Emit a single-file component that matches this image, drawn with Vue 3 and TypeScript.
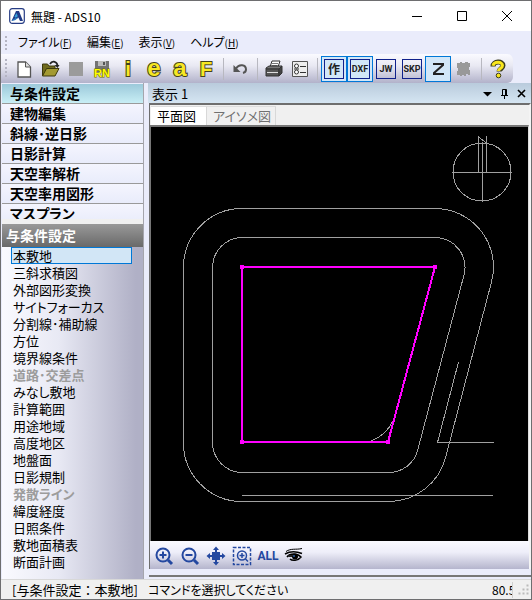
<script setup lang="ts">
import { ref } from 'vue'

interface Menu { label: string; key: string }
interface Item { label: string; disabled?: boolean }

const menus: Menu[] = [
  { label: 'ファイル', key: 'F' },
  { label: '編集', key: 'E' },
  { label: '表示', key: 'V' },
  { label: 'ヘルプ', key: 'H' },
]
const categories: string[] = ['与条件設定', '建物編集', '斜線･逆日影', '日影計算', '天空率解析', '天空率用図形', 'マスプラン']
const items: Item[] = [
  { label: '本敷地' }, { label: '三斜求積図' }, { label: '外部図形変換' }, { label: 'サイトフォーカス' },
  { label: '分割線･補助線' }, { label: '方位' }, { label: '境界線条件' }, { label: '道路･交差点', disabled: true },
  { label: 'みなし敷地' }, { label: '計算範囲' }, { label: '用途地域' }, { label: '高度地区' },
  { label: '地盤面' }, { label: '日影規制' }, { label: '発散ライン', disabled: true }, { label: '緯度経度' },
  { label: '日照条件' }, { label: '敷地面積表' }, { label: '断面計画' },
]
const tabs: string[] = ['平面図', 'アイソメ図']
const letters: string[] = ['i', 'e', 'a', 'F']
const category = ref('与条件設定')
const item = ref('本敷地')
const tab = ref('平面図')
const toggles = ref([
  { label: '作', on: true }, { label: 'DXF', on: true }, { label: 'JW', on: false }, { label: 'SKP', on: false },
])
const corners: [number, number][] = [[242, 267], [435, 267], [388, 442], [242, 442]]
</script>

<template>
  <div class="window">
    <header class="titlebar">
      <svg class="logo" width="16" height="16" viewBox="0 0 16 16" aria-hidden="true">
        <rect x=".7" y=".7" width="14.6" height="14.6" rx="2.5" fill="#fff" stroke="#263c84" stroke-width="1.2" />
        <path d="M2.5 13 7 3h3l4 10h-3L9.3 9.5 6 11.5z" fill="#203a86" />
        <path d="M5.500 8.500 7.500 5l1.300 3.200-2.200 1.500z" fill="#37a2dc" />
        <path d="M2.500 13c2-2.500 4-3.500 7-3.200L6 12.300z" fill="#2b78bd" />
      </svg>
      <h1 class="title">無題 - ADS10</h1>
      <div class="captions">
        <button class="caption" aria-label="最小化"><svg width="12" height="12"><path d="M1 6.500h10" stroke="#000" /></svg></button>
        <button class="caption" aria-label="最大化"><svg width="12" height="12"><path d="M1.500 1.500h9v9h-9z" fill="none" stroke="#000" /></svg></button>
        <button class="caption" aria-label="閉じる"><svg width="12" height="12"><path d="M1 1l10 10M11 1L1 11" stroke="#000" /></svg></button>
      </div>
    </header>

    <nav class="menubar">
      <span class="grip"></span>
      <button v-for="m in menus" :key="m.key" class="menu">{{ m.label }}<span class="key">(<u>{{ m.key }}</u>)</span></button>
    </nav>

    <div class="toolrow">
      <div class="toolbar">
        <span class="grip tall"></span>
        <button class="tool" aria-label="新規">
          <svg width="24" height="24"><path d="M6 5h7.500l5 5v10H6z" fill="#fff" stroke="#555" stroke-width="1.300" /><path d="M13.500 5v5h5" fill="#ddd" stroke="#555" /></svg>
        </button>
        <button class="tool" aria-label="開く">
          <svg width="24" height="24"><path d="M4.500 19V7h5l1.500 2h6v3" fill="#6f6a1c" stroke="#3c390c" /><path d="M4.500 19l4-7.500H21L17 19z" fill="#a39a32" stroke="#3c390c" /><path d="M12 7c2-3.500 6-3 7.500 1" fill="none" stroke="#222" stroke-width="1.800" /><path d="M16.500 8h5l-2 3z" fill="#222" /></svg>
        </button>
        <button class="tool" aria-label="保存" disabled>
          <svg width="24" height="24"><path d="M5 5h14v14H5z" fill="#9b9b9b" /></svg>
        </button>
        <button class="tool" aria-label="名前を付けて保存">
          <svg width="24" height="24"><path d="M5 4h14v11H5z" fill="#737373" /><path d="M8 4h8v5H8z" fill="#bbb" /><path d="M13 5h2v3h-2z" fill="#555" /><text x="12" y="20" class="rn">RN</text></svg>
        </button>
        <button v-for="l in letters" :key="l" class="tool">
          <svg width="26" height="26" class="glyph"><text x="13" y="20" class="letter" :class="{ small: l === 'F' || l === 'i' }">{{ l }}</text></svg>
        </button>
        <span class="sep"></span>
        <button class="tool" aria-label="元に戻す">
          <svg width="24" height="24"><path d="M8 11.500c3-5 10-4 10 1 0 2-1 3-3 3.500" fill="none" stroke="#555" stroke-width="2" /><path d="M5.500 8v7h7z" fill="#555" /></svg>
        </button>
        <span class="sep"></span>
        <button class="tool" aria-label="印刷">
          <svg width="24" height="24"><path d="M8 10l2-6h8l-2 6z" fill="#fff" stroke="#333" /><path d="M10 6.500h6M9.500 8.500h6" stroke="#777" /><path d="M4 11l3-2h13l-3 3H4z" fill="#777" stroke="#333" /><path d="M4 12h13v7H4z" fill="#555" stroke="#333" /><path d="M17 12l3-3v7l-3 3z" fill="#444" stroke="#333" /><path d="M5 15.500h11" stroke="#ddd" /></svg>
        </button>
        <button class="tool" aria-label="設定">
          <svg width="24" height="24"><path d="M4.500 4.500h15v15h-15z" fill="#eee" stroke="#555" /><circle cx="8.500" cy="9" r="2" fill="#fff" stroke="#333" /><circle cx="8.500" cy="15" r="2" fill="#fff" stroke="#333" /><path d="M12 9.500h6M12 15.500h6M6 12h5" stroke="#333" /></svg>
        </button>
        <span class="sep"></span>
        <button v-for="t in toggles" :key="t.label" class="tool" :class="{ on: t.on }" :aria-pressed="t.on" @click="t.on = !t.on">
          <span class="box" :class="{ kanji: t.label === '作' }">{{ t.label }}</span>
        </button>
        <button class="tool on" aria-label="Z">
          <svg width="24" height="24"><path d="M7 7h10v1L8 16v1h10" fill="none" stroke="#222" stroke-width="2" /></svg>
        </button>
        <button class="tool" aria-label="プラグイン" disabled>
          <svg width="24" height="24"><path d="M5 6h3v-1h2v1h3V5h3v1h2v4h-1v3h1v5h-2v-1h-2v2h-2v-1h-2v1H8v-1H5v-4h1v-3H5z" fill="#999" /></svg>
        </button>
        <span class="sep"></span>
        <button class="tool" aria-label="ヘルプ">
          <svg width="24" height="24"><path d="M7 9.500C7 4 17 3.500 17 8.500c0 3-4 3.500-4 6" fill="none" stroke="#3b3b1c" stroke-width="5" /><path d="M7 8.800C8 4 16.500 4.500 16.500 8.500c0 3-4 3-4 5.500" fill="none" stroke="#f8e51c" stroke-width="3" /><circle cx="12.500" cy="18.500" r="2.300" fill="#f8e51c" stroke="#3b3b1c" /></svg>
        </button>
      </div>
    </div>

    <main class="work">
      <aside class="side">
        <div class="categories">
          <button v-for="c in categories" :key="c" class="category" :class="{ active: c === category }" @click="category = c">{{ c }}</button>
        </div>
        <h2 class="sidehead">{{ category }}</h2>
        <div class="items">
          <button v-for="i in items" :key="i.label" class="item" :class="{ selected: i.label === item }" :disabled="i.disabled" @click="item = i.label">{{ i.label }}</button>
        </div>
      </aside>

      <section class="pane">
        <div class="panehead">
          <h2 class="panetitle">表示 1</h2>
          <button class="mini" aria-label="メニュー"><svg width="11" height="11"><path d="M1 4h9L5.500 8.500z" /></svg></button>
          <button class="mini" aria-label="固定"><svg width="11" height="11"><path d="M3.500 7V1.500h4V7M6.500 1v6M2 7.500h7M5.500 7v4" fill="none" stroke="#000" /></svg></button>
          <button class="mini" aria-label="閉じる"><svg width="11" height="11"><path d="M2 2l7 7M9 2L2 9" stroke="#000" stroke-width="1.600" /></svg></button>
        </div>
        <div class="view">
          <div class="tabs">
            <button v-for="t in tabs" :key="t" class="tab" :class="{ current: t === tab }" @click="tab = t">{{ t }}</button>
          </div>
          <div class="canvas">
            <svg class="drawing" width="100%" height="100%" shape-rendering="crispEdges" role="img" aria-label="平面図">
              <g transform="translate(-151 -127)" fill="none" stroke="#a0a0a0">
                <circle cx="482" cy="172" r="29" />
                <path d="M452 172.500h60M482.500 142v60M478.500 172v-35l8 6M486.500 172v-36M478 143.500h9" />
                <path d="M242 237.500H435A30 30 0 0 1 464 275L418 449A30 30 0 0 1 388 472.500H242A30 30 0 0 1 212.500 442V267A30 30 0 0 1 242 237.500z" />
                <path d="M242 208.500H435A58.500 58.500 0 0 1 491.500 282L446 456A59 59 0 0 1 388 501.500H242A58.500 58.500 0 0 1 183.500 442V267A58.500 58.500 0 0 1 242 208.500z" />
                <path d="M242 495.500h251M458.500 362L437.500 442.500H494M371 441C382 437 389 430 394 419" />
                <path d="M242 267H435L388 442H242z" stroke="#ff00ff" stroke-width="2" />
                <rect v-for="(c, n) in corners" :key="n" :x="c[0] - 2" :y="c[1] - 2" width="4" height="4" fill="#ff00ff" stroke="none" />
              </g>
            </svg>
          </div>
          <div class="viewtools">
            <button class="tool" aria-label="拡大"><svg width="24" height="24" class="blue"><circle cx="11" cy="11" r="6.500" /><path d="M16 16l4 4" stroke-width="3" /><path d="M7.500 11h7M11 7.500v7" /></svg></button>
            <button class="tool" aria-label="縮小"><svg width="24" height="24" class="blue"><circle cx="11" cy="11" r="6.500" /><path d="M16 16l4 4" stroke-width="3" /><path d="M7.500 11h7" /></svg></button>
            <button class="tool" aria-label="移動"><svg width="24" height="24" class="solid"><path d="M8 8h8v8H8zM12 2.500l3 3.500h-2V8h-2V6H9zM12 21.500l3-3.500h-2v-2h-2v2H9zM2.500 12L6 9v2h2v2H6v2zM21.500 12L18 9v2h-2v2h2v2z" /></svg></button>
            <button class="tool" aria-label="範囲拡大"><svg width="24" height="24" class="blue"><path d="M3.500 3.500h17v17h-17z" stroke-width="1.500" stroke-dasharray="3 1.500" /><circle cx="12" cy="11.500" r="4.500" stroke-width="1.500" /><path d="M15.500 15l2.500 2.500M9.500 11.500h5M12 9v5" stroke-width="1.500" /></svg></button>
            <button class="tool all">ALL</button>
            <button class="tool" aria-label="表示"><svg width="24" height="24"><path d="M4 7.500C9 4 14 6 20 4.500" fill="none" stroke="#000" /><path d="M3 10c5-3 11-3 17-.5M5 13c3-4 10-4 14 0-3 4-9 4-11 2" fill="none" stroke="#000" stroke-width="1.500" /><circle cx="13" cy="12.500" r="3" fill="#000" /><circle cx="12" cy="12" r="1" fill="#36a" /><path d="M6 11h4v2H7z" fill="#222" /></svg></button>
          </div>
        </div>
        <div class="dock"></div>
      </section>
    </main>

    <footer class="status">
      <span class="mode">[与条件設定：{{ item }}]</span>
      <span class="hint">コマンドを選択してください</span>
      <span class="value">80.5</span>
      <svg width="14" height="14" class="resize" aria-hidden="true"><path d="M9 1h3v3H9zM5 5h3v3H5zM9 5h3v3H9zM1 9h3v3H1zM5 9h3v3H5zM9 9h3v3H9z" /></svg>
    </footer>
  </div>
</template>

<style>
body { margin: 0; }
</style>

<style scoped>
.window {
  box-sizing: border-box;
  min-height: 100vh;
  display: flex;
  flex-direction: column;
  border: 1px solid #6e6e70;
  background: #eaecfb;
  color: #000;
  font: 13px/17px "Noto Sans CJK JP", "Noto Sans", sans-serif;
  font-feature-settings: "palt";
}
.window * { box-sizing: border-box; }
button { margin: 0; padding: 0; border: 0; background: none; color: inherit; font: inherit; font-feature-settings: inherit; white-space: nowrap; }
h1, h2 { margin: 0; font: inherit; }
svg { display: block; flex: none; }

.titlebar { height: 30px; display: flex; align-items: center; padding-left: 8px; background: #fff; }
.title { flex: 1; padding-left: 6px; font-size: 12px; }
.captions { display: flex; padding-right: 2px; }
.caption { width: 45px; height: 30px; display: grid; place-items: center; }

.menubar { height: 23px; display: flex; align-items: center; gap: 15px; padding-left: 4px; }
.grip { width: 3px; height: 14px; margin-right: -5px; background: repeating-linear-gradient(#b4b4c2 0 2px, transparent 2px 4px) 0 0 / 2px 100% no-repeat; }
.menu { font-size: 12px; line-height: 20px; }
.key { font-size: 10px; }

.toolrow { padding-right: 18px; }
.toolbar { height: 29px; display: flex; align-items: center; padding-left: 4px; border-radius: 0 6px 6px 0; background: linear-gradient(#fafaff, #e9e9f3 40%, #b2b2ca); }
.grip.tall { height: 20px; margin-right: 3px; }
.tool { width: 26px; height: 26px; flex: none; display: grid; place-items: center; }
.tool.on { border: 1px solid #0078d7; background: #d2e7f8; }
.sep { width: 8px; height: 22px; flex: none; background: linear-gradient(#b8b8c0, #b8b8c0) 4px 0 / 1px 100% no-repeat; }
.box { width: 20px; height: 20px; border: 1px solid #10218b; display: grid; place-items: center; font: bold 9px/18px Roboto, "Liberation Sans", sans-serif; color: #222; }
.box.kanji { font: bold 12px/18px "Noto Sans CJK JP", sans-serif; }
.glyph { overflow: visible; }
.letter { font: bold 24px "Liberation Sans", sans-serif; text-anchor: middle; fill: #f8e824; stroke: #44421c; stroke-width: 2px; paint-order: stroke; }
.letter.small { font-size: 20px; }
.rn { font: bold 11px "Liberation Sans", sans-serif; text-anchor: middle; fill: #ffff00; stroke: #6a6a00; stroke-width: 1px; paint-order: stroke; }

.work { flex: 1; display: flex; gap: 4px; padding-left: 1px; }
.side { width: 142px; flex: none; display: flex; flex-direction: column; border-right: 1px solid #a5a5ad; }
.categories { height: 141px; padding-top: 1px; overflow: hidden; border-bottom: 5px solid #f0f0f0; }
.category { display: block; width: 100%; height: 20px; padding-left: 8px; border-bottom: 1px solid #9a9a9a; background: linear-gradient(#f4f5fe, #e9ecfb); text-align: left; font-weight: bold; font-size: 14px; line-height: 19px; }
.category.active { background: linear-gradient(#9cc9da, #c8eef5); }
.sidehead { height: 23px; padding-left: 4px; background: linear-gradient(#999, #696969); color: #fff; font-weight: bold; font-size: 14px; line-height: 23px; }
.items { flex: 1; padding: 0 11px 0 9px; background: linear-gradient(90deg, #fafaff, #e8e9f4 40%, #b0b0c6 95%); }
.item { display: block; width: 100%; height: 17px; padding-left: 1px; border: 1px solid transparent; line-height: 15px; text-align: left; }
.item.selected { border-color: #0078d7; background: #d2e6f6; }
.item:disabled { color: #9c9c9c; font-weight: bold; }

.pane { flex: 1; min-width: 0; display: flex; flex-direction: column; }
.panehead { height: 20px; display: flex; align-items: center; gap: 6px; padding: 0 4px; background: linear-gradient(#b9cbdc, #d5e5f2); }
.panetitle { flex: 1; }
.mini { width: 11px; height: 14px; display: grid; place-items: center; }
.view { flex: 1; display: flex; flex-direction: column; margin-left: 1px; border: solid #6e6e6e; border-width: 2px 0 0 1px; border-right: 2px solid #f4f4f4; background: #f0f0f0; }
.tabs { height: 20px; display: flex; padding: 1px 0 0 1px; }
.tab { padding: 0 4px 0 6px; border-right: 1px solid #d8d8d8; border-top: 1px solid #dcdcdc; color: #707070; line-height: 16px; }
.tab.current { padding-right: 10px; background: #fff; color: #000; }
.canvas { flex: 1; display: flex; border: solid #777; border-width: 2px 0 0 1px; border-right: 1px solid #ddd; background: #000; }
.drawing { flex: 1; height: auto; }
.viewtools { height: 28px; display: flex; align-items: center; padding: 2px 0 0 1px; background: linear-gradient(#fafaff, #eeeef9 40%, #b5b5cd); }
.blue { fill: none; stroke: #2448a0; stroke-width: 2px; }
.solid { fill: #2448a0; }
.all { font: bold 12px/26px Roboto, "Liberation Sans", sans-serif; color: #2448a0; }
.dock { height: 10px; margin-left: 1px; background: linear-gradient(#777, #777) 0 6px / 100% 2px no-repeat; }

.status { height: 20px; display: flex; align-items: center; padding-left: 11px; border-top: 1px solid #d8d8d8; background: #f0f0f0; }
.mode { width: 136px; flex: none; white-space: nowrap; font-feature-settings: normal; }
.hint { flex: 1; white-space: nowrap; font-size: 12px; }
.value { width: 21px; height: 16px; overflow: hidden; border-right: 1px solid #d0d0d0; font-size: 12px; line-height: 16px; }
.resize { margin-left: 4px; fill: #bbb; stroke: #f0f0f0; }
</style>
